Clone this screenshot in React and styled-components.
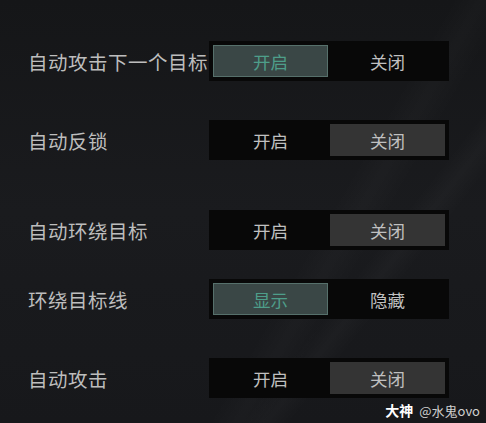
import React from 'react';
import styled, { createGlobalStyle } from 'styled-components';

const GlobalStyle = createGlobalStyle`
    html, body {
        margin: 0;
        padding: 0;
        background: #17181b;
    }
    body {
        font-family: "Noto Sans CJK SC", "Noto Sans", sans-serif;
    }
`;

const Page = styled.div`
    position: relative;
    width: 486px;
    height: 423px;
    overflow: hidden;
    background:
        linear-gradient(120deg, transparent 62%, rgba(255, 255, 255, 0.02) 66%, transparent 70%),
        linear-gradient(128deg, transparent 70%, rgba(255, 255, 255, 0.025) 73%, transparent 76%),
        linear-gradient(180deg, #151618 0%, #1a1b1e 50%, #17181b 100%);
    padding-top: 41px;
    box-sizing: border-box;
`;

const Row = styled.div`
    display: flex;
    align-items: center;
    padding-left: 28px;
    height: 40px;
    margin-top: ${(p) => p.$gap || 0}px;
`;

const Label = styled.div`
    width: 181px;
    font-size: 19.5px;
    color: #bdbdbd;
    letter-spacing: 0.5px;
    white-space: nowrap;
`;

const Switch = styled.div`
    display: flex;
    gap: 2px;
    width: 240px;
    height: 40px;
    padding: 4px;
    box-sizing: border-box;
    background: #080808;
`;

const Option = styled.div`
    flex: 1;
    display: flex;
    align-items: center;
    justify-content: center;
    font-size: 17.5px;
    box-sizing: border-box;
    color: ${(p) => (p.$active === 'teal' ? '#4e9e8a' : '#c0c0c0')};
    background: ${(p) =>
        p.$active === 'teal' ? '#3a4746' : p.$active === 'gray' ? '#343434' : 'transparent'};
    border: 1px solid ${(p) => (p.$active === 'teal' ? '#56706b' : 'transparent')};
`;

const Watermark = styled.div`
    position: absolute;
    right: 6px;
    bottom: 3px;
    display: flex;
    align-items: baseline;
    gap: 6px;
    font-size: 13px;
    color: #d0d0d0;
`;

const Brand = styled.span`
    font-weight: bold;
    font-size: 14px;
    color: #ffffff;
`;

const rows = [
    { label: '自动攻击下一个目标', opts: ['开启', '关闭'], on: 0, kind: 'teal', gap: 0 },
    { label: '自动反锁', opts: ['开启', '关闭'], on: 1, kind: 'gray', gap: 39 },
    { label: '自动环绕目标', opts: ['开启', '关闭'], on: 1, kind: 'gray', gap: 50 },
    { label: '环绕目标线', opts: ['显示', '隐藏'], on: 0, kind: 'teal', gap: 29 },
    { label: '自动攻击', opts: ['开启', '关闭'], on: 1, kind: 'gray', gap: 39 },
];

export default function App() {
    return (
        <Page>
            <GlobalStyle />
            {rows.map((r) => (
                <Row key={r.label} $gap={r.gap}>
                    <Label>{r.label}</Label>
                    <Switch>
                        {r.opts.map((o, i) => (
                            <Option key={o} $active={i === r.on ? r.kind : null}>
                                {o}
                            </Option>
                        ))}
                    </Switch>
                </Row>
            ))}
            <Watermark>
                <Brand>大神</Brand>
                <span>@水鬼ovo</span>
            </Watermark>
        </Page>
    );
}
